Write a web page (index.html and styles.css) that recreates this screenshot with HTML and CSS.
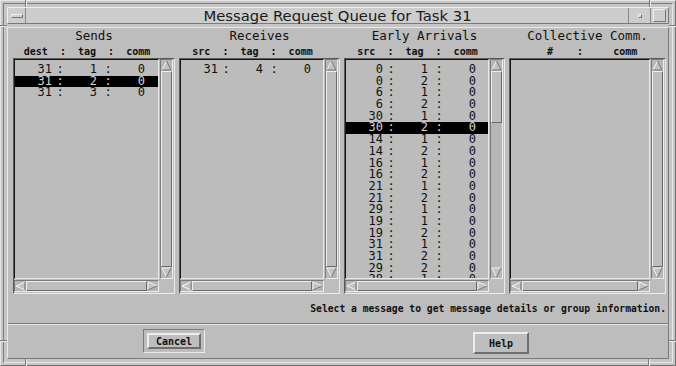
FILE: index.html
```html
<!DOCTYPE html>
<html lang="en">
<head>
  <meta charset="UTF-8" />
  <title>Message Request Queue for Task 31</title>
  <link rel="stylesheet" href="styles.css">
</head>
<body>
  <div class="window">
    <span class="tick tick-v" style="left:24px;top:-1px"></span>
    <span class="tick tick-v" style="left:648px;top:-1px"></span>
    <span class="tick tick-v" style="left:24px;bottom:-1px"></span>
    <span class="tick tick-v" style="left:647px;bottom:-1px"></span>
    <span class="tick tick-h" style="top:24px;left:-1px"></span>
    <span class="tick tick-h" style="top:24px;right:-1px"></span>
    <span class="tick tick-h" style="top:339px;left:-1px"></span>
    <span class="tick tick-h" style="top:339px;right:-1px"></span>

    <div class="frame">
      <div class="titlebar">
        <div class="tb-menu"><span class="menu-bar"></span></div>
        <div class="tb-title">Message Request Queue for Task 31</div>
        <div class="tb-min"><span class="min-dot"></span></div>
        <div class="tb-max"><span class="max-box"></span></div>
      </div>

      <div class="client">
        <div class="panels">
          <section class="panel">
            <h2>Sends</h2>
            <div class="cols">dest  :  tag  :  comm</div>
            <div class="listbox">
              <div class="list">
                <div class="row"><span>31</span><span>:</span><span>1</span><span>:</span><span>0</span></div>
                <div class="row sel"><span>31</span><span>:</span><span>2</span><span>:</span><span>0</span></div>
                <div class="row"><span>31</span><span>:</span><span>3</span><span>:</span><span>0</span></div>
              </div>
              <div class="vscroll">
                <svg class="arrow" width="11" height="11" viewBox="0 0 11 11"><path d="M5.5 1 L10 10 L1 10 Z" fill="#c2c2c2"/><path d="M1 10 L5.5 1" stroke="#f4f4f4"/><path d="M5.5 1 L10 10 L1 10" stroke="#777" fill="none"/></svg>
                <div class="slider"></div>
                <svg class="arrow" width="11" height="11" viewBox="0 0 11 11"><path d="M1 1 L10 1 L5.5 10 Z" fill="#c2c2c2"/><path d="M5.5 10 L1 1 L10 1" stroke="#f4f4f4" fill="none"/><path d="M10 1 L5.5 10" stroke="#777"/></svg>
              </div>
              <div class="hscroll">
                <svg class="arrow" width="11" height="10" viewBox="0 0 11 10"><path d="M1 5 L10 1 L10 9 Z" fill="#c2c2c2"/><path d="M10 1 L1 5 L10 9" stroke="#f4f4f4" fill="none"/><path d="M10 1 L10 9" stroke="#777"/></svg>
                <div class="slider"></div>
                <svg class="arrow" width="11" height="10" viewBox="0 0 11 10"><path d="M1 1 L10 5 L1 9 Z" fill="#c2c2c2"/><path d="M1 9 L1 1 L10 5" stroke="#f4f4f4" fill="none"/><path d="M10 5 L1 9" stroke="#777"/></svg>
              </div>
              <div class="corner"></div>
            </div>
          </section>

          <section class="panel">
            <h2>Receives</h2>
            <div class="cols">src  :  tag  :  comm</div>
            <div class="listbox">
              <div class="list">
                <div class="row"><span>31</span><span>:</span><span>4</span><span>:</span><span>0</span></div>
              </div>
              <div class="vscroll">
                <svg class="arrow" width="11" height="11" viewBox="0 0 11 11"><path d="M5.5 1 L10 10 L1 10 Z" fill="#c2c2c2"/><path d="M1 10 L5.5 1" stroke="#f4f4f4"/><path d="M5.5 1 L10 10 L1 10" stroke="#777" fill="none"/></svg>
                <div class="slider"></div>
                <svg class="arrow" width="11" height="11" viewBox="0 0 11 11"><path d="M1 1 L10 1 L5.5 10 Z" fill="#c2c2c2"/><path d="M5.5 10 L1 1 L10 1" stroke="#f4f4f4" fill="none"/><path d="M10 1 L5.5 10" stroke="#777"/></svg>
              </div>
              <div class="hscroll">
                <svg class="arrow" width="11" height="10" viewBox="0 0 11 10"><path d="M1 5 L10 1 L10 9 Z" fill="#c2c2c2"/><path d="M10 1 L1 5 L10 9" stroke="#f4f4f4" fill="none"/><path d="M10 1 L10 9" stroke="#777"/></svg>
                <div class="slider"></div>
                <svg class="arrow" width="11" height="10" viewBox="0 0 11 10"><path d="M1 1 L10 5 L1 9 Z" fill="#c2c2c2"/><path d="M1 9 L1 1 L10 5" stroke="#f4f4f4" fill="none"/><path d="M10 5 L1 9" stroke="#777"/></svg>
              </div>
              <div class="corner"></div>
            </div>
          </section>

          <section class="panel">
            <h2>Early Arrivals</h2>
            <div class="cols">src  :  tag  :  comm</div>
            <div class="listbox">
              <div class="list">
                <div class="row"><span>0</span><span>:</span><span>1</span><span>:</span><span>0</span></div>
                <div class="row"><span>0</span><span>:</span><span>2</span><span>:</span><span>0</span></div>
                <div class="row"><span>6</span><span>:</span><span>1</span><span>:</span><span>0</span></div>
                <div class="row"><span>6</span><span>:</span><span>2</span><span>:</span><span>0</span></div>
                <div class="row"><span>30</span><span>:</span><span>1</span><span>:</span><span>0</span></div>
                <div class="row sel"><span>30</span><span>:</span><span>2</span><span>:</span><span>0</span></div>
                <div class="row"><span>14</span><span>:</span><span>1</span><span>:</span><span>0</span></div>
                <div class="row"><span>14</span><span>:</span><span>2</span><span>:</span><span>0</span></div>
                <div class="row"><span>16</span><span>:</span><span>1</span><span>:</span><span>0</span></div>
                <div class="row"><span>16</span><span>:</span><span>2</span><span>:</span><span>0</span></div>
                <div class="row"><span>21</span><span>:</span><span>1</span><span>:</span><span>0</span></div>
                <div class="row"><span>21</span><span>:</span><span>2</span><span>:</span><span>0</span></div>
                <div class="row"><span>29</span><span>:</span><span>1</span><span>:</span><span>0</span></div>
                <div class="row"><span>19</span><span>:</span><span>1</span><span>:</span><span>0</span></div>
                <div class="row"><span>19</span><span>:</span><span>2</span><span>:</span><span>0</span></div>
                <div class="row"><span>31</span><span>:</span><span>1</span><span>:</span><span>0</span></div>
                <div class="row"><span>31</span><span>:</span><span>2</span><span>:</span><span>0</span></div>
                <div class="row"><span>29</span><span>:</span><span>2</span><span>:</span><span>0</span></div>
                <div class="row"><span>28</span><span>:</span><span>1</span><span>:</span><span>0</span></div>
              </div>
              <div class="vscroll">
                <svg class="arrow" width="11" height="11" viewBox="0 0 11 11"><path d="M5.5 1 L10 10 L1 10 Z" fill="#c2c2c2"/><path d="M1 10 L5.5 1" stroke="#f4f4f4"/><path d="M5.5 1 L10 10 L1 10" stroke="#777" fill="none"/></svg>
                <div class="trough">
                  <div class="slider slider-short"></div>
                </div>
                <svg class="arrow" width="11" height="11" viewBox="0 0 11 11"><path d="M1 1 L10 1 L5.5 10 Z" fill="#c2c2c2"/><path d="M5.5 10 L1 1 L10 1" stroke="#f4f4f4" fill="none"/><path d="M10 1 L5.5 10" stroke="#777"/></svg>
              </div>
              <div class="hscroll">
                <svg class="arrow" width="11" height="10" viewBox="0 0 11 10"><path d="M1 5 L10 1 L10 9 Z" fill="#c2c2c2"/><path d="M10 1 L1 5 L10 9" stroke="#f4f4f4" fill="none"/><path d="M10 1 L10 9" stroke="#777"/></svg>
                <div class="slider"></div>
                <svg class="arrow" width="11" height="10" viewBox="0 0 11 10"><path d="M1 1 L10 5 L1 9 Z" fill="#c2c2c2"/><path d="M1 9 L1 1 L10 5" stroke="#f4f4f4" fill="none"/><path d="M10 5 L1 9" stroke="#777"/></svg>
              </div>
              <div class="corner"></div>
            </div>
          </section>

          <section class="panel">
            <h2>Collective Comm.</h2>
            <div class="cols cols-coll">#    :     comm</div>
            <div class="listbox">
              <div class="list"></div>
              <div class="vscroll">
                <svg class="arrow" width="11" height="11" viewBox="0 0 11 11"><path d="M5.5 1 L10 10 L1 10 Z" fill="#c2c2c2"/><path d="M1 10 L5.5 1" stroke="#f4f4f4"/><path d="M5.5 1 L10 10 L1 10" stroke="#777" fill="none"/></svg>
                <div class="slider"></div>
                <svg class="arrow" width="11" height="11" viewBox="0 0 11 11"><path d="M1 1 L10 1 L5.5 10 Z" fill="#c2c2c2"/><path d="M5.5 10 L1 1 L10 1" stroke="#f4f4f4" fill="none"/><path d="M10 1 L5.5 10" stroke="#777"/></svg>
              </div>
              <div class="hscroll">
                <svg class="arrow" width="11" height="10" viewBox="0 0 11 10"><path d="M1 5 L10 1 L10 9 Z" fill="#c2c2c2"/><path d="M10 1 L1 5 L10 9" stroke="#f4f4f4" fill="none"/><path d="M10 1 L10 9" stroke="#777"/></svg>
                <div class="slider"></div>
                <svg class="arrow" width="11" height="10" viewBox="0 0 11 10"><path d="M1 1 L10 5 L1 9 Z" fill="#c2c2c2"/><path d="M1 9 L1 1 L10 5" stroke="#f4f4f4" fill="none"/><path d="M10 5 L1 9" stroke="#777"/></svg>
              </div>
              <div class="corner"></div>
            </div>
          </section>
        </div>

        <div class="status">Select a message to get message details or group information.</div>

        <div class="buttons">
          <div class="default-ring"><button class="btn btn-cancel">Cancel</button></div>
          <button class="btn btn-help">Help</button>
        </div>
      </div>
    </div>
  </div>
</body>
</html>
```

FILE: styles.css
```css
* {
  box-sizing: border-box;
}
body {
  margin: 0;
  background: #c4c4c4;
  font-family: "DejaVu Sans Mono", monospace;
  color: #111;
}
.window {
  position: relative;
  width: 676px;
  height: 366px;
  padding: 2px;
  background: #c6c6c6;
  border: 1px solid;
  border-color: #e6e6e6 #6e6e6e #6e6e6e #e6e6e6;
}
.tick {
  position: absolute;
  background: #7a7a7a;
}
.tick-v {
  width: 1px;
  height: 7px;
  box-shadow: 1px 0 0 #ececec;
}
.tick-h {
  width: 7px;
  height: 1px;
  box-shadow: 0 1px 0 #ececec;
}
.frame {
  height: 100%;
  border: 1px solid;
  border-color: #7c7c7c #e6e6e6 #e6e6e6 #7c7c7c;
  padding: 3px;
  display: flex;
  flex-direction: column;
}

/* title bar */
.titlebar {
  display: flex;
  height: 17px;
  border: 1px solid;
  border-color: #eeeeee #7a7a7a #7a7a7a #eeeeee;
  background: #cdcdcd;
}
.tb-menu {
  width: 18px;
  border-right: 1px solid #8a8a8a;
  display: flex;
  align-items: center;
  justify-content: center;
}
.menu-bar {
  width: 12px;
  height: 4px;
  border: 1px solid;
  border-color: #f2f2f2 #767676 #767676 #f2f2f2;
}
.tb-title {
  flex: 1;
  padding-left: 21px;
  text-align: center;
  font-family: "DejaVu Sans", sans-serif;
  font-size: 14.8px;
  line-height: 15px;
  color: #1a1a1a;
}
.tb-min {
  width: 22px;
  border-left: 1px solid #8a8a8a;
  display: flex;
  align-items: center;
  justify-content: center;
}
.min-dot {
  width: 4px;
  height: 4px;
  border: 1px solid;
  border-color: #f2f2f2 #767676 #767676 #f2f2f2;
}
.tb-max {
  width: 18px;
  border-left: 1px solid #8a8a8a;
  display: flex;
  align-items: center;
  justify-content: center;
}
.max-box {
  width: 13px;
  height: 13px;
  border: 1px solid;
  border-color: #f2f2f2 #767676 #767676 #f2f2f2;
}

/* client area */
.client {
  flex: 1;
  margin-top: 3px;
  background: #bdbdbd;
  border: 1px solid;
  border-color: #e8e8e8 #7a7a7a #7a7a7a #e8e8e8;
  display: flex;
  flex-direction: column;
}
.panels {
  display: grid;
  grid-template-columns: 162px 161px 161px 157px;
  gap: 4px;
  padding: 1px 0 0 5px;
}
.panel h2 {
  margin: 0;
  font-size: 12.5px;
  font-weight: normal;
  line-height: 14px;
  text-align: center;
  color: #111;
}
.cols {
  margin-top: 3px;
  padding-right: 14px;
  font-size: 10px;
  font-weight: bold;
  line-height: 11px;
  white-space: pre;
  text-align: center;
}
.cols-coll {
  text-align: left;
  padding-left: 38px;
}
.listbox {
  height: 236px;
  margin-top: 1px;
  border: 1px solid;
  border-color: #5a5a5a #ececec #ececec #5a5a5a;
  padding: 0 1px 1px 0;
  display: grid;
  grid-template-columns: 1fr 13px;
  grid-template-rows: 1fr 12px;
  gap: 1px;
}
.list {
  overflow: hidden;
  padding-top: 4px;
  background: #bcbcbc;
  border: 1px solid;
  border-color: #161616 #e8e8e8 #e8e8e8 #161616;
}
.row {
  display: grid;
  grid-template-columns: 37px 16px 29px 22px 26px;
  height: 11.7px;
  line-height: 11.7px;
  font-size: 12px;
}
.row span:nth-child(odd) {
  text-align: right;
}
.row span:nth-child(even) {
  text-align: center;
}
.row.sel {
  background: #000;
  color: #d6d6d6;
}

/* scrollbars */
.vscroll {
  display: flex;
  flex-direction: column;
  background: #b6b6b6;
  border: 1px solid;
  border-color: #7a7a7a #ececec #ececec #7a7a7a;
}
.hscroll {
  display: flex;
  background: #b6b6b6;
  border: 1px solid;
  border-color: #7a7a7a #ececec #ececec #7a7a7a;
}
.arrow {
  display: block;
  flex: none;
}
.slider {
  flex: 1;
  background: #bebebe;
  border: 1px solid;
  border-color: #eeeeee #6a6a6a #6a6a6a #eeeeee;
}
.trough {
  flex: 1;
}
.slider-short {
  height: 52px;
}

/* footer */
.status {
  height: 29px;
  padding: 9px 2px 0 0;
  text-align: right;
  font-size: 9.7px;
  font-weight: bold;
  line-height: 12px;
}
.buttons {
  flex: 1;
  border-top: 1px solid #7a7a7a;
  box-shadow: inset 0 1px 0 #e8e8e8;
  display: flex;
  align-items: flex-start;
  gap: 268px;
  padding: 5px 0 0 135px;
}
.default-ring {
  padding: 3px;
  border: 1px solid;
  border-color: #7a7a7a #ececec #ececec #7a7a7a;
}
.btn {
  display: flex;
  align-items: center;
  justify-content: center;
  padding: 0;
  background: #bebebe;
  color: #111;
  border: 2px solid;
  border-color: #eeeeee #6e6e6e #6e6e6e #eeeeee;
  font-family: "DejaVu Sans Mono", monospace;
  font-size: 10px;
  font-weight: bold;
}
.btn-cancel {
  width: 54px;
  height: 16px;
}
.btn-help {
  width: 56px;
  height: 22px;
  margin-top: 3px;
}
```
